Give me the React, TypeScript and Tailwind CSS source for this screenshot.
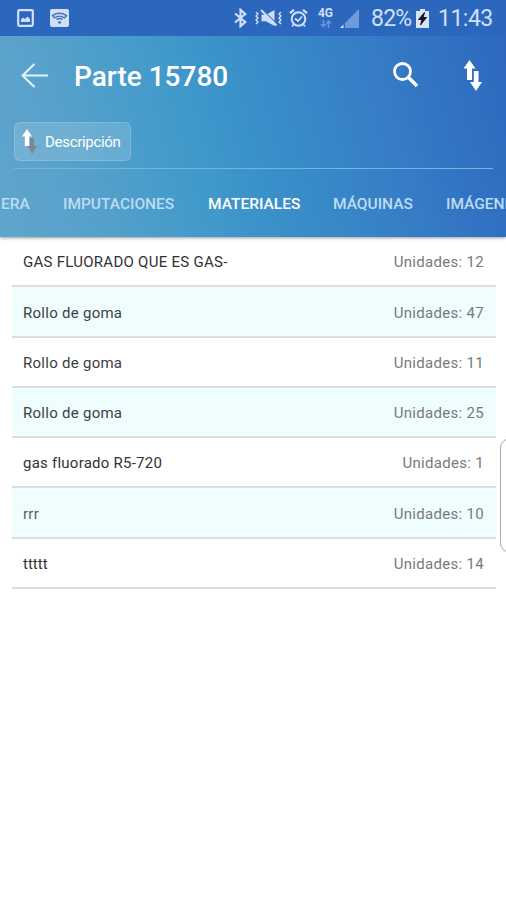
const rows = [
  { name: 'GAS FLUORADO QUE ES GAS-', units: 12, tone: 'text-[#333] tracking-[0.27px]' },
  { name: 'Rollo de goma', units: 47, tone: 'text-[#3b4444] tracking-[0.27px]' },
  { name: 'Rollo de goma', units: 11, tone: 'text-[#3d3d3d] tracking-[0.27px]' },
  { name: 'Rollo de goma', units: 25, tone: 'text-[#3b4444] tracking-[0.27px]' },
  { name: 'gas fluorado R5-720', units: 1, tone: 'text-[#333] tracking-[0.24px]' },
  { name: 'rrr', units: 10, tone: 'text-[#566060] tracking-[0.27px]' },
  { name: 'ttttt', units: 14, tone: 'text-[#333]' },
];

function StatusBar() {
  return (
    <div className="relative z-10 h-9 bg-[#2b67bd] flex items-center text-[#cfe0f8]">
      <svg className="ml-[17px]" width="17" height="18" viewBox="0 0 17 18" fill="none">
        <rect x="1.2" y="1.2" width="14.6" height="15.6" rx="1" stroke="currentColor" strokeWidth="2.2" />
        <path d="M4 13V10.5L6 8.5L8 10L10.5 7.5L13 10V13Z" fill="currentColor" />
      </svg>
      <svg className="ml-4" width="19" height="18" viewBox="0 0 19 18" fill="none">
        <rect width="19" height="18" rx="2" fill="currentColor" />
        <g stroke="#4673ae" strokeWidth="1.4">
          <path d="M2.5 6.6Q9.5 2 16.5 6.6L14.5 8.8Q9.5 5.5 4.5 8.8Z" />
          <path d="M6.5 10.6Q9.5 8.4 12.5 10.6" />
        </g>
        <circle cx="9.5" cy="13.4" r="1.4" fill="#4673ae" />
      </svg>
      <svg className="ml-[165px]" width="13" height="20" viewBox="0 0 13 20" fill="none" stroke="currentColor" strokeWidth="2.2">
        <path d="M1 5.5L11.3 14L6.5 18.2V1.8L11.3 6L1 14.5" />
      </svg>
      <svg className="ml-2" width="27" height="20" viewBox="0 0 27 20" fill="none">
        <path d="M6.5 6.8H11L19.5 2V18L11 13.2H6.5Z" fill="currentColor" />
        <path d="M7.5 2L21.5 15.5" stroke="#2b67bd" strokeWidth="1.3" />
        <path d="M6 2L21.5 17.5" stroke="currentColor" strokeWidth="2" />
        <path d="M1 4L3 6L1 8L3 10L1 12L3 14L1 16M26 4L24 6L26 8L24 10L26 12L24 14L26 16" stroke="currentColor" strokeWidth="1.4" />
      </svg>
      <svg className="ml-[7px]" width="19" height="20" viewBox="0 0 19 20" fill="none" stroke="currentColor">
        <circle cx="9.5" cy="11" r="6.8" strokeWidth="2" />
        <path d="M1 5.2L5 1.8M18 5.2L14 1.8" strokeWidth="2.2" />
        <path d="M6 10.5L9 13L13 8.5M4.8 16.2L3 18.5M14.2 16.2L16 18.5" strokeWidth="1.7" />
      </svg>
      <div className="ml-[9px] w-[17px] h-7 flex flex-col items-center pt-[3px]">
        <span className="text-[12px] leading-[12px] font-bold">4G</span>
        <svg className="mt-px" width="12" height="8" viewBox="0 0 12 8" fill="none" stroke="#6f97da" strokeWidth="1.5">
          <path d="M3.5 0V6M1 4L3.5 6.5L6 4M8.5 8V1.5M6.5 3.5L8.5 1L11 3.5" />
        </svg>
      </div>
      <svg className="ml-[6px]" width="19" height="19" viewBox="0 0 19 19">
        <path d="M19 0V19H5V14Z" fill="#6f9ade" />
        <path d="M3.5 15.5V19H0Z" fill="#dce9fb" />
      </svg>
      <span className="ml-[12px] mt-[2px] w-[42px] text-[23px] leading-9 tracking-[-0.8px] whitespace-nowrap">82%</span>
      <svg className="ml-[3px]" width="13" height="19" viewBox="0 0 13 19">
        <path d="M4 0H9V2H13V19H0V2H4Z" fill="#d8e4f4" />
        <path d="M8.5 3.5L2.5 10.5H6L4.5 16L10.5 8.5H7Z" fill="#10182a" stroke="#10182a" />
      </svg>
      <span className="ml-[9px] mt-[2px] text-[23px] leading-9 tracking-[-0.5px] whitespace-nowrap">11:43</span>
    </div>
  );
}

function Header() {
  return (
    <header className="h-[201px] flex flex-col text-white overflow-hidden shadow-[0_1px_3px_rgba(0,0,0,0.4)] bg-[linear-gradient(75deg,#60a5cc_0%,#56a1cb_17%,#429acb_37%,#3a90c9_50%,#367dc6_74%,#2c68bf_100%)]">
      <div className="h-[86px] shrink-0 flex items-start pt-[26px]">
        <svg className="ml-[21px] mt-[1px]" width="28" height="26" viewBox="0 0 28 26" fill="none" stroke="#e6f3fc" strokeWidth="2">
          <path d="M27 12.5H1.5M13.5 1L1.5 12.5L13.5 24" />
        </svg>
        <h1 className="ml-[25px] -mt-px w-[156px] text-[28px] leading-8 font-medium whitespace-nowrap">Parte 15780</h1>
        <svg className="ml-[163px]" width="26" height="26" viewBox="0 0 26 26" fill="none" stroke="currentColor">
          <circle cx="9.5" cy="9.5" r="8" strokeWidth="2.8" />
          <path d="M15.5 15.5L24 24" strokeWidth="3.6" />
        </svg>
        <svg className="ml-[44px] -mt-[2px]" width="20" height="32" viewBox="0 0 20 32" fill="currentColor">
          <path d="M6.5 0L12.5 8.5H9V20H4V8.5H0.5Z" />
          <path d="M10.8 11H15.5V22H19L13 31L7 22H10.8Z" />
        </svg>
      </div>
      <div className="ml-[14px] w-[117px] h-[39px] shrink-0 rounded-[6px] border border-white/15 bg-white/15 flex items-center">
        <svg className="ml-[7px]" width="16" height="26" viewBox="0 0 16 26">
          <path d="M5 0L10 7.5H7.2V17H2.8V7.5H0Z" fill="#fff" />
          <path d="M8 9H12V17H15L10 25L5.5 17H8Z" fill="#7f868f" />
        </svg>
        <span className="ml-[7px] text-[15px] leading-5 tracking-[-0.3px]">Descripción</span>
      </div>
      <div className="mt-[7px] ml-[14px] mr-[13px] h-px shrink-0 bg-[#6db8df]" />
      <nav className="flex-1 flex text-[15.5px] leading-[70px] font-medium text-[#bddcf3] whitespace-nowrap">
        <span className="w-[63px] shrink-0 pl-[1px]">ERA</span>
        <span className="w-[129px] shrink-0">IMPUTACIONES</span>
        <span className="w-[125px] shrink-0 pl-4 text-white border-b-[3px] border-[#d73584]">MATERIALES</span>
        <span className="w-[129px] shrink-0 pl-4">MÁQUINAS</span>
        <span className="shrink-0">IMÁGENES</span>
      </nav>
    </header>
  );
}

export default function App() {
  return (
    <div className="relative w-[506px] h-[900px] overflow-hidden bg-white font-['Roboto','Liberation_Sans',sans-serif]">
      <StatusBar />
      <Header />
      <ul className="ml-3 mr-[10px]">
        {rows.map((r, i) => (
          <li key={i} className="h-[50.25px] pt-[3px] pl-[11px] pr-[12px] flex items-center justify-between border-b-2 border-[#dcdddd] even:bg-[#f0fdff] text-[15px] whitespace-nowrap">
            <span className={r.tone}>{r.name}</span>
            <span className="text-[#757b7b] tracking-[0.3px]">Unidades: {r.units}</span>
          </li>
        ))}
      </ul>
      <div className="absolute left-[500px] top-[438px] w-5 h-[115px] rounded-[12px] border border-[#aaa] bg-white" />
    </div>
  );
}
